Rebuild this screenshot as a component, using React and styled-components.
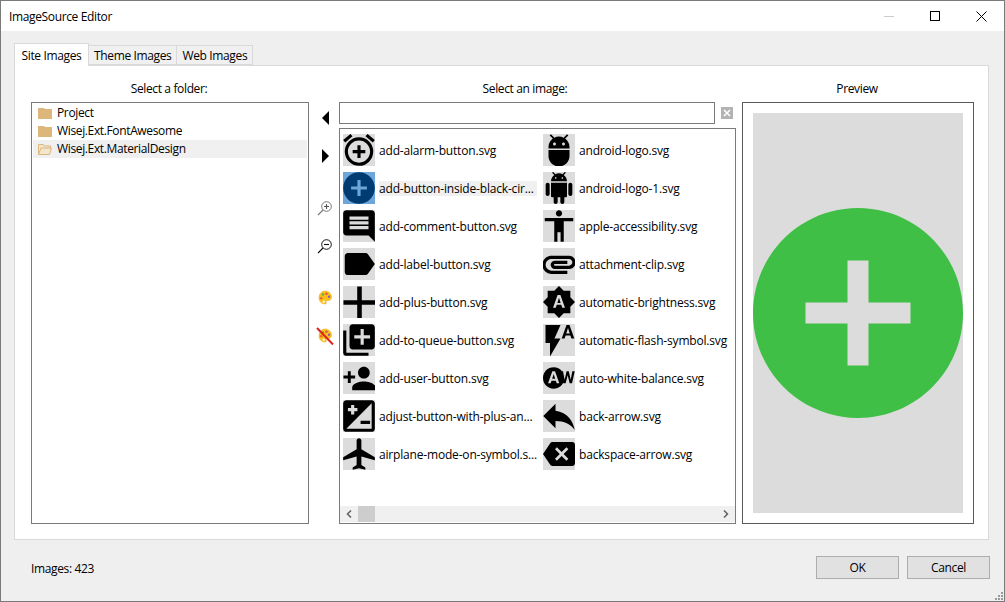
import styled, { createGlobalStyle } from 'styled-components'
import {
  MdAddAlarm, MdAddCircle, MdInsertComment, MdLabel, MdAdd, MdLibraryAdd, MdPersonAdd,
  MdAirplanemodeActive, MdAdb, MdAccessibility, MdAttachment, MdBrightnessAuto,
  MdFlashAuto, MdWbAuto, MdReply, MdBackspace,
} from 'react-icons/md'

const GlobalStyle = createGlobalStyle`
  html, body {
    margin: 0;
    overflow: hidden;
    font-family: "Open Sans", "Noto Sans", sans-serif;
    font-size: 12px;
    letter-spacing: -0.36px;
    color: #000;
  }
`

function ExposureIcon({ size }) {
  return (
    <svg width={size} height={size} viewBox="0 0 24 24" fill="currentColor">
      <path d="M20 2H4c-1.100 0-2 .9-2 2v16c0 1.100.9 2 2 2h16c1.100 0 2-.9 2-2V4c0-1.100-.9-2-2-2zM5 7h2V5h2v2h2v2H9v2H7V9H5V7zm15 13H4L20 4v16zm-7-3h6v-2h-6v2z" fillRule="evenodd" />
    </svg>
  )
}

function AndroidIcon({ size }) {
  return (
    <svg width={size} height={size} viewBox="0 0 24 24" fill="currentColor">
      <path d="M6 18c0 .55.45 1 1 1h1v3.500c0 .83.67 1.500 1.500 1.500s1.500-.67 1.500-1.500V19h2v3.500c0 .83.67 1.500 1.500 1.500s1.500-.67 1.500-1.500V19h1c.55 0 1-.45 1-1V8H6v10zM3.500 8C2.670 8 2 8.670 2 9.500v7c0 .83.67 1.500 1.500 1.500S5 17.330 5 16.500v-7C5 8.670 4.330 8 3.500 8zm17 0c-.83 0-1.500.67-1.500 1.500v7c0 .83.67 1.500 1.500 1.500s1.500-.67 1.500-1.500v-7c0-.83-.67-1.500-1.500-1.500zm-4.970-5.840l1.300-1.300c.2-.2.2-.51 0-.71-.2-.2-.51-.2-.71 0l-1.480 1.480C13.850 1.230 12.950 1 12 1c-.96 0-1.860.23-2.660.63L7.850.15c-.2-.2-.51-.2-.71 0-.2.2-.2.51 0 .71l1.310 1.310C6.970 3.260 6 5.010 6 7h12c0-1.990-.97-3.750-2.470-4.840zM10 5H9V4h1v1zm5 0h-1V4h1v1z" />
    </svg>
  )
}

function FolderIcon({ open }) {
  return (
    <svg width="14" height="12" viewBox="0 0 14 12">
      {open ? (
        <>
          <path d="M0.500 11V1.500h5l1 1.500h6v2" fill="#f3e6cf" stroke="#dcb67a" />
          <path d="M0.500 11.500L3 5h10.500L11.500 11.500z" fill="#f3e6cf" stroke="#dcb67a" />
        </>
      ) : (
        <path d="M0 1h6l1 1h7v10H0z" fill="#dcb67a" />
      )}
    </svg>
  )
}

function ZoomIcon({ plus }) {
  const color = plus ? '#777' : '#111'
  return (
    <svg width="16" height="16" viewBox="0 0 16 16" fill="none" stroke={color}>
      <circle cx="9.500" cy="6.500" r="4.800" />
      <path d="M6 10L1 15" strokeWidth="1.100" />
      <path d="M7 6.500h5" strokeWidth="1.100" stroke={plus ? '#555' : '#111'} />
      {plus && <path d="M9.500 4v5" strokeWidth="1.100" stroke="#555" />}
    </svg>
  )
}

function PaletteIcon({ off }) {
  return (
    <svg width="18" height="18" viewBox="0 0 18 18">
      <path d="M9 2c3.600 0 6.500 2.800 6.500 6.300 0 2-1.400 3.200-3 3.200h-1.500c-1 0-1.300 1-.8 1.700.5.800-.1 1.800-1.200 1.800C5.600 15 3 12.300 3 8.800 3 5 5.500 2 9 2z" fill="#fbbf1a" stroke="#eda514" strokeWidth=".5" />
      <circle cx="7" cy="5.500" r="1.200" fill="#6aa84f" />
      <circle cx="10.500" cy="4.800" r="1.200" fill="#d9534f" />
      <circle cx="13" cy="7.800" r="1.200" fill="#8e5bb5" />
      <circle cx="5.200" cy="9.200" r="1.200" fill="#e8602f" />
      <circle cx="7.800" cy="12.800" r="1.300" fill="#fff4c8" />
      {off && <path d="M1 1L17 17.500" stroke="#e0211c" strokeWidth="2" />}
    </svg>
  )
}

const images = [
  { name: 'add-alarm-button.svg', Icon: MdAddAlarm, size: 38 },
  { name: 'android-logo.svg', Icon: MdAdb, size: 36 },
  { name: 'add-button-inside-black-cir...', Icon: MdAddCircle, size: 38, selected: true },
  { name: 'android-logo-1.svg', Icon: AndroidIcon, size: 32 },
  { name: 'add-comment-button.svg', Icon: MdInsertComment, size: 38 },
  { name: 'apple-accessibility.svg', Icon: MdAccessibility, size: 38 },
  { name: 'add-label-button.svg', Icon: MdLabel, size: 38 },
  { name: 'attachment-clip.svg', Icon: MdAttachment, size: 40 },
  { name: 'add-plus-button.svg', Icon: MdAdd, size: 55 },
  { name: 'automatic-brightness.svg', Icon: MdBrightnessAuto, size: 34 },
  { name: 'add-to-queue-button.svg', Icon: MdLibraryAdd, size: 38 },
  { name: 'automatic-flash-symbol.svg', Icon: MdFlashAuto, size: 36 },
  { name: 'add-user-button.svg', Icon: MdPersonAdd, size: 35 },
  { name: 'auto-white-balance.svg', Icon: MdWbAuto, size: 32 },
  { name: 'adjust-button-with-plus-an...', Icon: ExposureIcon, size: 38 },
  { name: 'back-arrow.svg', Icon: MdReply, size: 42 },
  { name: 'airplane-mode-on-symbol.s...', Icon: MdAirplanemodeActive, size: 38 },
  { name: 'backspace-arrow.svg', Icon: MdBackspace, size: 32 },
]

export default function App() {
  return (
    <>
      <GlobalStyle />
      <Window>
        <TitleBar>
          <Title>ImageSource Editor</Title>
          <WindowControls>
            <WindowButton>
              <svg width="10" height="10"><path d="M0 5.500h10" stroke="#ccc" /></svg>
            </WindowButton>
            <WindowButton>
              <svg width="10" height="10"><rect x=".5" y=".5" width="9" height="9" fill="none" stroke="#000" /></svg>
            </WindowButton>
            <WindowButton>
              <svg width="11" height="11"><path d="M.5.500l10 10M10.500.500l-10 10" stroke="#000" /></svg>
            </WindowButton>
          </WindowControls>
        </TitleBar>

        <Body>
          <Tabs>
            <Tab $active>Site Images</Tab>
            <Tab>Theme Images</Tab>
            <Tab>Web Images</Tab>
          </Tabs>
          <Panel>
            <Column>
              <ColumnLabel>Select a folder:</ColumnLabel>
              <FolderTree>
                <FolderRow><FolderIcon />Project</FolderRow>
                <FolderRow><FolderIcon />Wisej.Ext.FontAwesome</FolderRow>
                <FolderRow $selected><FolderIcon open />Wisej.Ext.MaterialDesign</FolderRow>
              </FolderTree>
            </Column>

            <Toolbar>
              <ToolGroup>
                <Tool><Arrow $left /></Tool>
                <Tool><Arrow /></Tool>
              </ToolGroup>
              <ToolGroup>
                <Tool><ZoomIcon plus /></Tool>
                <Tool><ZoomIcon /></Tool>
              </ToolGroup>
              <ToolGroup>
                <Tool><PaletteIcon /></Tool>
                <Tool><PaletteIcon off /></Tool>
              </ToolGroup>
            </Toolbar>

            <Column>
              <ColumnLabel $inset={25}>Select an image:</ColumnLabel>
              <SearchRow>
                <SearchInput />
                <ClearButton>
                  <svg width="8" height="8"><path d="M1 1l6 6M7 1L1 7" stroke="#fff" strokeWidth="1.500" /></svg>
                </ClearButton>
              </SearchRow>
              <ImageList>
                <ImageGrid>
                  {images.map(({ name, Icon, size, selected }) => (
                    <ImageItem key={name}>
                      <Tile $selected={selected}><Icon size={size} /></Tile>
                      <ImageName $selected={selected}>{name}</ImageName>
                    </ImageItem>
                  ))}
                </ImageGrid>
                <ScrollBar>
                  <ScrollArrow>
                    <svg width="6" height="8"><path d="M5 .500L1.500 4 5 7.500" fill="none" stroke="#606060" strokeWidth="1.500" /></svg>
                  </ScrollArrow>
                  <ScrollThumb />
                  <ScrollArrow $end>
                    <svg width="6" height="8"><path d="M1 .500L4.500 4 1 7.500" fill="none" stroke="#606060" strokeWidth="1.500" /></svg>
                  </ScrollArrow>
                </ScrollBar>
              </ImageList>
            </Column>

            <PreviewColumn>
              <ColumnLabel $inset={2}>Preview</ColumnLabel>
              <PreviewBox>
                <PreviewImage><MdAddCircle size={252} /></PreviewImage>
              </PreviewBox>
            </PreviewColumn>
          </Panel>
        </Body>

        <Footer>
          <Count>Images: 423</Count>
          <DialogButton>OK</DialogButton>
          <DialogButton>Cancel</DialogButton>
          <Grip>
            <svg width="10" height="10" fill="#9a9a9a">
              <rect x="7" y="1" width="2" height="2" />
              <rect x="4" y="4" width="2" height="2" />
              <rect x="7" y="4" width="2" height="2" />
              <rect x="1" y="7" width="2" height="2" />
              <rect x="4" y="7" width="2" height="2" />
              <rect x="7" y="7" width="2" height="2" />
            </svg>
          </Grip>
        </Footer>
      </Window>
    </>
  )
}

const Window = styled.div`
  position: relative;
  display: flex;
  flex-direction: column;
  box-sizing: border-box;
  width: 1005px;
  height: 602px;
  border: 1px solid #7a7a7a;
  background: #efefef;
`
const TitleBar = styled.div`
  display: flex;
  align-items: center;
  height: 30px;
  padding-left: 8px;
  background: #fff;
`
const Title = styled.div`
  font-size: 12px;
`
const WindowControls = styled.div`
  display: flex;
  margin-left: auto;
`
const WindowButton = styled.div`
  display: flex;
  align-items: center;
  justify-content: center;
  width: 46px;
  height: 30px;
`
const Body = styled.div`
  padding: 12px 15px 0 13px;
`
const Tabs = styled.div`
  display: flex;
  align-items: flex-end;
  height: 22px;
`
const Tab = styled.div`
  position: relative;
  z-index: 1;
  box-sizing: border-box;
  display: flex;
  align-items: center;
  justify-content: center;
  width: ${props => props.$active ? '75px' : 'auto'};
  padding: 0 ${props => props.$active ? '0 0 0 1px' : '5px'};
  height: ${props => props.$active ? '23px' : '20px'};
  margin-bottom: ${props => props.$active ? '-1px' : '0'};
  background: ${props => props.$active ? '#fff' : '#f0f0f0'};
  border: 1px solid #d9d9d9;
  border-bottom: ${props => props.$active ? 'none' : '1px solid #d9d9d9'};
  border-left: ${props => props.$active ? '1px solid #d9d9d9' : 'none'};
`
const Panel = styled.div`
  display: grid;
  grid-template-columns: 278px 30px 397px 232px;
  box-sizing: border-box;
  height: 475px;
  padding: 14px 14px 15px 16px;
  background: #fff;
  border: 1px solid #d9d9d9;
`
const Column = styled.div`
  display: flex;
  flex-direction: column;
  min-width: 0;
`
const PreviewColumn = styled(Column)`
  margin-left: 6px;
  width: 232px;
`
const ColumnLabel = styled.div`
  height: 22px;
  line-height: 17px;
  text-align: center;
  padding-right: ${props => props.$inset || 2}px;
`
const FolderTree = styled.div`
  flex: 1;
  padding: 1px;
  border: 1px solid #7a7a7a;
`
const FolderRow = styled.div`
  display: flex;
  align-items: center;
  gap: 5px;
  box-sizing: border-box;
  height: 18px;
  padding: 0 0 1px 5px;
  background: ${props => props.$selected ? '#f0f0f0' : 'transparent'};
`
const Toolbar = styled.div`
  display: flex;
  flex-direction: column;
  gap: 20px;
  padding-top: 22px;
`
const ToolGroup = styled.div`
  display: flex;
  flex-direction: column;
  gap: 6px;
`
const Tool = styled.div`
  display: flex;
  align-items: center;
  justify-content: center;
  height: 32px;
  padding-left: 2px;
`
const Arrow = styled.div`
  width: 0;
  height: 0;
  border-top: 7px solid transparent;
  border-bottom: 7px solid transparent;
  border-left: ${props => props.$left ? 'none' : '7px solid #000'};
  border-right: ${props => props.$left ? '7px solid #000' : 'none'};
`
const SearchRow = styled.div`
  display: flex;
  align-items: center;
  gap: 6px;
  margin-bottom: 4px;
`
const SearchInput = styled.div`
  box-sizing: border-box;
  width: 376px;
  height: 22px;
  border: 1px solid #7a7a7a;
`
const ClearButton = styled.div`
  display: flex;
  align-items: center;
  justify-content: center;
  width: 12px;
  height: 12px;
  background: #b3b3b3;
`
const ImageList = styled.div`
  flex: 1;
  display: flex;
  flex-direction: column;
  border: 1px solid #7a7a7a;
  min-height: 0;
`
const ImageGrid = styled.div`
  flex: 1;
  display: grid;
  grid-template-columns: 200px 190px;
  grid-auto-rows: 32px;
  row-gap: 6px;
  padding: 5px 0 0 3px;
`
const ImageItem = styled.div`
  display: flex;
  align-items: center;
  gap: 4px;
  min-width: 0;
`
const Tile = styled.div`
  flex: none;
  display: flex;
  align-items: center;
  justify-content: center;
  width: 32px;
  height: 32px;
  overflow: hidden;
  background: ${props => props.$selected ? '#6ea6d9' : '#dcdcdc'};
  color: ${props => props.$selected ? '#003c71' : '#000'};
  svg { flex: none; }
`
const ImageName = styled.div`
  white-space: nowrap;
  line-height: 15px;
  letter-spacing: -0.18px;
  background: ${props => props.$selected ? '#f0f0f0' : 'transparent'};
  width: ${props => props.$selected ? '158px' : 'auto'};
`
const ScrollBar = styled.div`
  display: flex;
  align-items: center;
  height: 16px;
  margin: 0 0 1px;
  background: #f0f0f0;
`
const ScrollArrow = styled.div`
  display: flex;
  align-items: center;
  justify-content: center;
  width: 18px;
  height: 16px;
  margin-left: ${props => props.$end ? 'auto' : '0'};
`
const ScrollThumb = styled.div`
  width: 17px;
  height: 16px;
  background: #cdcdcd;
`
const PreviewBox = styled.div`
  flex: 1;
  padding: 10px;
  border: 1px solid #5a5a5a;
  display: flex;
`
const PreviewImage = styled.div`
  flex: 1;
  display: flex;
  align-items: center;
  justify-content: center;
  overflow: hidden;
  background: #dcdcdc;
  color: #3fbf45;
  svg { flex: none; }
`
const Footer = styled.div`
  flex: 1;
  display: flex;
  align-items: center;
  gap: 8px;
  padding: 0 14px 6px 30px;
`
const Count = styled.div`
  margin-right: auto;
  padding-top: 1px;
`
const DialogButton = styled.div`
  box-sizing: border-box;
  display: flex;
  align-items: center;
  justify-content: center;
  width: 83px;
  height: 23px;
  background: #e1e1e1;
  border: 1px solid #adadad;
`
const Grip = styled.div`
  position: absolute;
  right: 0;
  bottom: 0;
  width: 10px;
  height: 10px;
  line-height: 0;
`
